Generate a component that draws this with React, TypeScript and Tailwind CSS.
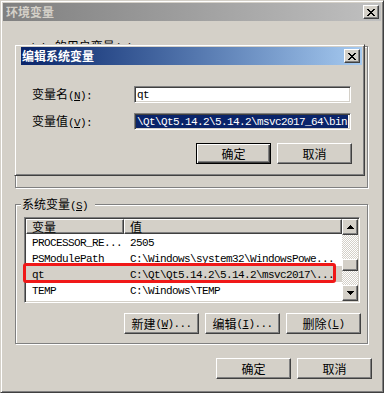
import React from "react";

type C = { children?: React.ReactNode };

function A({ children }: C) {
  return (
    <span className="font-['Liberation_Mono',monospace] text-[11px] tracking-[-0.6px]">
      {children}
    </span>
  );
}

function Bitmap({ rows, color = "#000" }: { rows: string[]; color?: string }) {
  const w = rows[0].length;
  const h = rows.length;
  return (
    <svg width={w} height={h} viewBox={`0 0 ${w} ${h}`} shapeRendering="crispEdges">
      {rows.flatMap((r, y) =>
        r.split("").map((ch, x) =>
          ch === "X" ? <rect key={`${x}-${y}`} x={x} y={y} width={1} height={1} fill={color} /> : null
        )
      )}
    </svg>
  );
}

const X_ROWS = ["XX....XX", ".XX..XX.", "..XXXX..", "...XX...", "..XXXX..", ".XX..XX.", "XX....XX"];
const UP_ROWS = ["...X...", "..XXX..", ".XXXXX.", "XXXXXXX"];
const DOWN_ROWS = ["XXXXXXX", ".XXXXX.", "..XXX..", "...X..."];

const raised =
  "border border-t-white border-l-white border-r-[#404040] border-b-[#404040] shadow-[inset_-1px_-1px_0_#808080]";

function CloseBtn() {
  return (
    <div className={`w-[16px] h-[14px] bg-[#d4d0c8] ${raised} flex items-center justify-center`}>
      <Bitmap rows={X_ROWS} />
    </div>
  );
}

function Btn({ children, def }: C & { def?: boolean }) {
  const frame = def
    ? "border border-black shadow-[inset_1px_1px_0_#ffffff,inset_-1px_-1px_0_#404040,inset_-2px_-2px_0_#808080]"
    : raised;
  return (
    <div className={`w-[75px] h-[21px] bg-[#d4d0c8] ${frame} flex items-center justify-center text-[12px] leading-[12px]`}>
      {children}
    </div>
  );
}

const groupBox =
  "relative border border-[#808080] shadow-[inset_1px_1px_0_#ffffff,1px_1px_0_#ffffff]";

const sunken =
  "border border-t-[#808080] border-l-[#808080] border-r-white border-b-white shadow-[inset_1px_1px_0_#404040,inset_-1px_-1px_0_#d4d0c8] p-[1px]";

const rows: [string, string][] = [
  ["PROCESSOR_RE...", "2505"],
  ["PSModulePath", "C:\\Windows\\system32\\WindowsPowe..."],
  ["qt", "C:\\Qt\\Qt5.14.2\\5.14.2\\msvc2017\\..."],
  ["TEMP", "C:\\Windows\\TEMP"],
];

function ListView({ items, selected, showHeader = true }: { items: [string, string][]; selected?: number; showHeader?: boolean }) {
  return (
    <div className={`ml-[8px] mt-[12px] w-[336px] h-[86px] bg-white ${sunken}`}>
      <div className="flex h-full overflow-hidden">
        <div className="w-[316px] flex flex-col overflow-hidden">
          <div className="flex h-[15px] shrink-0">
            <div className={`w-[98px] h-full bg-[#d4d0c8] ${raised} pl-[5px] flex items-center leading-[12px]`}>
              {showHeader ? "变量" : ""}
            </div>
            <div className={`flex-1 h-full bg-[#d4d0c8] ${raised} pl-[5px] flex items-center leading-[12px]`}>
              {showHeader ? "值" : ""}
            </div>
          </div>
          {items.map(([k, v], i) => (
            <div key={k} className={`flex h-[16px] shrink-0 items-center ${i === selected ? "bg-[#d4d0c8]" : ""}`}>
              <div className="w-[98px] pl-[6px] whitespace-nowrap overflow-hidden">
                <A>{k}</A>
              </div>
              <div className="flex-1 pl-[6px] whitespace-nowrap overflow-hidden">
                <A>{v}</A>
              </div>
            </div>
          ))}
        </div>
        <div className="w-[16px] flex flex-col shrink-0">
          <div className={`h-[16px] shrink-0 bg-[#d4d0c8] ${raised} flex items-center justify-center`}>
            <Bitmap rows={UP_ROWS} />
          </div>
          <div className="flex-1 flex flex-col bg-[repeating-conic-gradient(#ffffff_0_25%,#d4d0c8_0_50%)] bg-[length:2px_2px]">
            <div className="h-[24px]" />
            <div className={`h-[12px] bg-[#d4d0c8] ${raised}`} />
          </div>
          <div className={`h-[16px] shrink-0 bg-[#d4d0c8] ${raised} flex items-center justify-center`}>
            <Bitmap rows={DOWN_ROWS} />
          </div>
        </div>
      </div>
    </div>
  );
}

function ButtonRow({ labels = true }: { labels?: boolean }) {
  return (
    <div className="flex justify-end gap-[6px] mr-[6px] mt-[10px]">
      <Btn>{labels && <>新建<A>(<u>W</u>)...</A></>}</Btn>
      <Btn>{labels && <>编辑<A>(<u>I</u>)...</A></>}</Btn>
      <Btn>{labels && <>删除<A>(<u>L</u>)</A></>}</Btn>
    </div>
  );
}

export default function App() {
  return (
    <div className="relative w-[384px] h-[393px] overflow-hidden bg-[#d4d0c8] border border-t-[#d4d0c8] border-l-[#d4d0c8] border-r-[#404040] border-b-[#404040] shadow-[inset_1px_1px_0_#ffffff,inset_-1px_-1px_0_#808080] p-[2px] font-['Noto_Sans_CJK_SC',sans-serif] text-[12px] leading-[12px] text-black">
      {/* main title bar */}
      <div className="h-[18px] bg-linear-to-r from-[#808080] to-[#c0c0c0] flex items-center justify-between pl-[3px] pr-[2px]">
        <span className="font-bold text-[#d4d0c8]">环境变量</span>
        <CloseBtn />
      </div>

      {/* user variables group (mostly hidden behind the dialog) */}
      <div className={`${groupBox} mt-[25px] ml-[12px] w-[353px] h-[142px]`}>
        <div className="absolute left-[5px] -top-[7px] pl-[1px] pr-[7px] bg-[#d4d0c8] whitespace-nowrap">
          <A>Admin</A> 的用户变量<A>(<u>U</u>)</A>
        </div>
        <ListView items={[]} showHeader={false} />
        <ButtonRow labels={false} />
      </div>

      {/* system variables group */}
      <div className={`${groupBox} mt-[16px] ml-[12px] w-[353px] h-[140px]`}>
        <div className="absolute left-[5px] -top-[7px] pl-[1px] pr-[7px] bg-[#d4d0c8] whitespace-nowrap">
          系统变量<A>(<u>S</u>)</A>
        </div>
        <ListView items={rows} selected={2} />
        <ButtonRow />
      </div>

      {/* bottom buttons */}
      <div className="flex justify-end gap-[6px] mr-[9px] mt-[14px]">
        <Btn>确定</Btn>
        <Btn>取消</Btn>
      </div>

      {/* red annotation */}
      <div className="absolute left-[22px] top-[262px] w-[313px] h-[20px] border-[3px] border-[#f01818] rounded-[3px]" />

      {/* edit dialog overlay */}
      <div className="absolute left-[13px] top-[43px] w-[351px] h-[132px] bg-[#d4d0c8] border border-t-[#d4d0c8] border-l-[#d4d0c8] border-r-[#404040] border-b-[#404040] shadow-[inset_1px_1px_0_#ffffff,inset_-1px_-1px_0_#808080] pt-[2px] pl-[6px] pr-[2px]">
        <div className="h-[18px] bg-linear-to-r from-[#0a246a] to-[#a6caf0] flex items-center justify-between pl-[1px] pr-[2px]">
          <span className="font-bold text-white">编辑系统变量</span>
          <CloseBtn />
        </div>
        <div className="flex items-center mt-[21px] h-[17px]">
          <div className="w-[113px] pl-[11px] whitespace-nowrap">
            变量名<A>(<u>N</u>):</A>
          </div>
          <div className={`w-[217px] h-[17px] bg-white ${sunken} flex items-center pl-[2px] overflow-hidden`}>
            <A>qt</A>
          </div>
        </div>
        <div className="flex items-center mt-[10px] h-[17px]">
          <div className="w-[113px] pl-[11px] whitespace-nowrap">
            变量值<A>(<u>V</u>):</A>
          </div>
          <div className={`w-[217px] h-[17px] bg-white ${sunken} flex items-center pl-[1px] pr-[1px] overflow-hidden`}>
            <div className="w-[212px] h-[13px] bg-[#0a246a] text-white whitespace-nowrap overflow-hidden flex items-center pl-[1px]">
              <A>\Qt\Qt5.14.2\5.14.2\msvc2017_64\bin</A>
            </div>
          </div>
        </div>
        <div className="flex justify-end gap-[6px] mt-[13px] pr-[10px]">
          <Btn def>确定</Btn>
          <Btn>取消</Btn>
        </div>
      </div>
    </div>
  );
}
